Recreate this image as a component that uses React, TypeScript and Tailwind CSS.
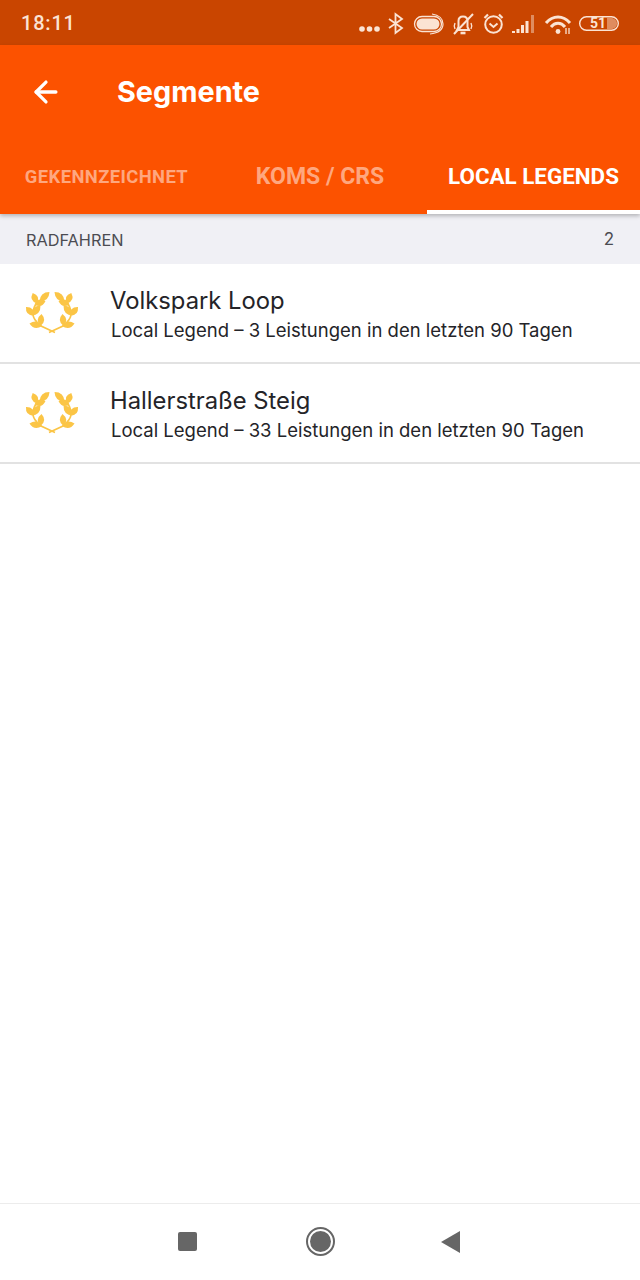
import { ArrowLeft } from "lucide-react";

const segments = [
  { name: "Volkspark Loop", efforts: 3 },
  { name: "Hallerstraße Steig", efforts: 33 },
];

// wreath leaves as [tipX, tipY, baseX, baseY]
const leaves = [
  [25.5, 3, 15.5, 12.5],
  [8.7, 4, 13, 14.5],
  [21.5, 12, 10.5, 15.5],
  [2, 18, 10, 26.5],
  [16.5, 16.5, 7.5, 26.5],
  [5.5, 34.5, 18, 37],
  [17.5, 25, 16.5, 37],
];

function leafPath([x1, y1, x2, y2]: number[], bulge = 6.5) {
  const mx = (x1 + x2) / 2;
  const my = (y1 + y2) / 2;
  const len = Math.hypot(x2 - x1, y2 - y1);
  const nx = (-(y2 - y1) / len) * bulge;
  const ny = ((x2 - x1) / len) * bulge;
  return `M${x1} ${y1} Q${mx + nx} ${my + ny} ${x2} ${y2} Q${mx - nx} ${my - ny} ${x1} ${y1}Z`;
}

// one half of the wreath, mirrored for the other side
function LaurelHalf() {
  return (
    <g fill="#fbc546">
      {leaves.map((leaf) => (
        <path key={leaf.join()} d={leafPath(leaf)} />
      ))}
      <path d="M31 43.5 L17 37 C12 33 9 29 9 25 C9 19 11 15 15.5 12" stroke="#fbc546" strokeWidth="1.7" fill="none" />
    </g>
  );
}

function Laurel() {
  return (
    <svg width="56" height="48" viewBox="0 0 56 48" className="shrink-0">
      <LaurelHalf />
      <g transform="translate(56 0) scale(-1 1)">
        <LaurelHalf />
      </g>
    </svg>
  );
}

function StatusIcons() {
  return (
    <svg width="262" height="28" viewBox="0 0 262 28" fill="none" stroke="currentColor" strokeWidth="1.6" className="text-[#fbe3d3]">
      {/* overflow dots */}
      <circle cx="4" cy="20" r="2.8" fill="currentColor" stroke="none" />
      <circle cx="11.5" cy="20" r="2.8" fill="currentColor" stroke="none" />
      <circle cx="19" cy="20" r="2.8" fill="currentColor" stroke="none" />
      {/* bluetooth */}
      <path d="M31 10 L44 19 L37.5 24 V5 L44 10 L31 19" strokeWidth="1.8" />
      {/* pill toggle */}
      <rect x="58.5" y="9.5" width="23" height="11" rx="5.5" fill="currentColor" stroke="none" />
      <rect x="56.5" y="7.5" width="27" height="15" rx="7.5" strokeWidth="1.3" />
      <path d="M74 5 C81 6 85 10 85 15 C85 20 81 24 72 25" strokeWidth="1.2" />
      {/* muted bell */}
      <path d="M99 21 H111 L109.5 18 V12 C109.5 9 108 7.5 105 7.5 C102 7.5 100.5 9 100.5 12 V18 Z" strokeWidth="2" />
      <path d="M97 14 C96 16 96 18 97 20 M113 14 C114 16 114 18 113 20" strokeWidth="1.4" />
      <path d="M96 25 L115 5" strokeWidth="2" />
      <path d="M102.5 24 H107.5" strokeWidth="2.6" />
      {/* alarm clock */}
      <circle cx="135.5" cy="15.5" r="8.3" strokeWidth="2" />
      <path d="M131.5 14.5 L135.5 18 L139.5 14.5" strokeWidth="2" />
      <path d="M126.5 9 L130 5.5 M144.5 9 L141 5.5" strokeWidth="2.2" />
      {/* signal bars */}
      <path d="M155.5 22 V24 M160 20 V24 M164.5 16 V24 M169 12 V24" strokeWidth="3" />
      <path d="M174.5 6 V24" strokeWidth="3" opacity=".45" />
      {/* wifi */}
      <path d="M188 14 C195 6 205 6 212 14" strokeWidth="3" />
      <path d="M193 18 C197 13 203 13 207 18" strokeWidth="3" />
      <circle cx="200" cy="22.5" r="2.4" fill="currentColor" stroke="none" />
      <path d="M208 25 V19 M211 25 V19" strokeWidth="1.3" />
      {/* battery frame */}
      <rect x="221.7" y="7.7" width="38.6" height="13.6" rx="6.8" strokeWidth="1.4" />
      <path d="M249 9 V20 H253 C256.5 20 259 17.5 259 14.5 C259 11.5 256.5 9 253 9Z" fill="currentColor" stroke="none" opacity=".45" />
    </svg>
  );
}

export default function App() {
  return (
    <div className="flex h-[1280px] w-[640px] flex-col bg-white font-['Inter',sans-serif]">
      {/* Status bar */}
      <div className="relative flex h-[45px] items-center justify-between bg-[#c94500] pl-[21px] pr-[20px]">
        <span className="font-['Roboto',sans-serif] text-[20px] font-medium tracking-[0.8px] text-[#fbe3d3]">
          18:11
        </span>
        <StatusIcons />
        <span className="absolute right-[34px] top-[14px] font-['Roboto',sans-serif] text-[14px] font-bold leading-[18px] text-[#fbe3d3]">
          51
        </span>
      </div>

      {/* Toolbar and tabs */}
      <div className="relative z-10 bg-[#fc5200] shadow-[0_2px_4px_rgba(0,0,0,0.25)]">
        <div className="flex h-[93px] items-center pl-[29px]">
          <ArrowLeft size={34} strokeWidth={2.3} className="text-white" />
          <h1 className="ml-[54px] pt-[1px] text-[28.8px] font-bold leading-none text-white">Segmente</h1>
        </div>
        <div className="flex h-[76px] font-['Roboto',sans-serif] font-bold">
          <div className="flex w-[213px] items-center justify-center pt-[2px] text-[18.4px] tracking-[0.4px] text-[#fea77f]">
            GEKENNZEICHNET
          </div>
          <div className="flex w-[214px] items-center justify-center pt-[2px] text-[23px] text-[#fea77f]">
            KOMS / CRS
          </div>
          <div className="flex w-[213px] items-center justify-center border-b-[4px] border-white pt-[6px] text-[22.4px] text-white">
            LOCAL LEGENDS
          </div>
        </div>
      </div>

      {/* Section header */}
      <div className="flex h-[50px] items-center justify-between bg-[#f0f0f5] pl-[26px] pr-[26px] pt-[2px] text-[16.3px] text-[#4c4c52]">
        <span>RADFAHREN</span>
        <span className="text-[17px]">2</span>
      </div>

      {/* Segment list */}
      <div className="flex-1">
        {segments.map((segment) => (
          <div key={segment.name} className="flex h-[100px] items-center border-b-2 border-[#e2e2e2] pl-[24px]">
            <Laurel />
            <div className="ml-[31px] pt-[3px] text-[#242428]">
              <p className="-ml-[1px] text-[23.8px] leading-[30px]">{segment.name}</p>
              <p className="text-[18.5px] leading-[28px]">
                Local Legend – {segment.efforts} Leistungen in den letzten 90 Tagen
              </p>
            </div>
          </div>
        ))}
      </div>

      {/* Navigation bar */}
      <div className="flex h-[77px] items-center justify-center border-t border-[#ececec] pb-[1px] pr-[2px]">
        <div className="h-[19px] w-[19px] rounded-[2px] bg-[#666666]" />
        <div className="ml-[109px] flex h-[29px] w-[29px] items-center justify-center rounded-full border-[2px] border-[#666666]">
          <div className="h-[21px] w-[21px] rounded-full bg-[#666666]" />
        </div>
        <svg width="20" height="22" viewBox="0 0 20 22" className="ml-[106px]">
          <path d="M0 11 L19 0 V22Z" fill="#666666" />
        </svg>
      </div>
    </div>
  );
}
